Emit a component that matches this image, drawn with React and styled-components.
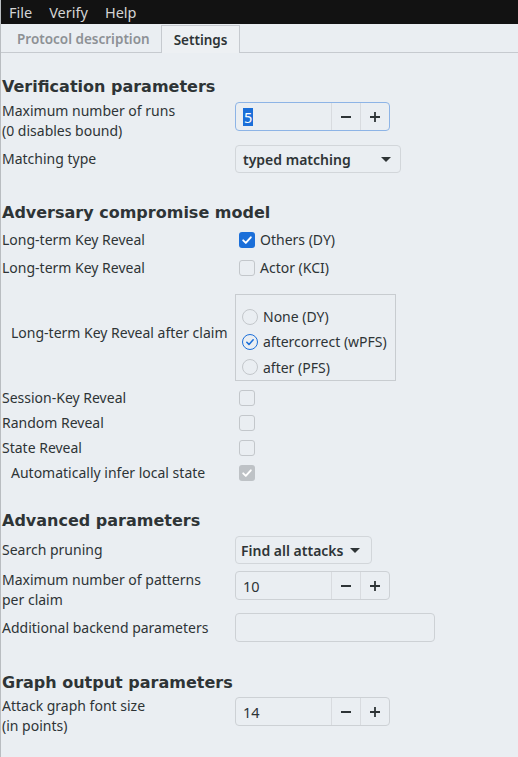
import React from "react";
import styled, { createGlobalStyle } from "styled-components";

const GlobalStyle = createGlobalStyle`
  html, body {
    margin: 0;
    padding: 0;
    background: #eaeef2;
  }
  body {
    font-family: "Noto Sans", "DejaVu Sans", sans-serif;
    font-size: 14px;
    color: #2e3436;
  }
`;

const Window = styled.div`
  width: 518px;
  height: 757px;
  overflow: hidden;
  background: #eaeef2;
  border-left: 1px solid #b9bdc1;
  box-sizing: border-box;
`;

const MenuBar = styled.div`
  height: 24px;
  background: #121212;
  display: flex;
  align-items: center;
  padding-left: 8px;
  gap: 17px;
`;

const MenuItem = styled.span`
  color: #d4d4d4;
  font-size: 14.5px;
  line-height: 24px;
`;

const TabBar = styled.div`
  height: 28px;
  display: flex;
  align-items: flex-end;
  padding-left: 5px;
  border-bottom: 1px solid #c6cacf;
`;

const Tab = styled.div`
  box-sizing: border-box;
  padding: 0 ${(p) => (p.$active ? "12px" : "10px")};
  display: flex;
  align-items: center;
  font-weight: 600;
  font-size: 13.5px;
  color: ${(p) => (p.$active ? "#2e3436" : "#8d9195")};
  background: ${(p) => (p.$active ? "#edf0f3" : "transparent")};
  border: 1px solid ${(p) => (p.$active ? "#c6cacf" : "transparent")};
  border-bottom: none;
  margin-bottom: ${(p) => (p.$active ? "-1px" : "0")};
  height: ${(p) => (p.$active ? "28px" : "27px")};
`;

const Content = styled.div`
  padding-left: 1px;
`;

const Heading = styled.h3`
  margin: 0;
  margin-top: ${(p) => p.$top}px;
  height: 20px;
  line-height: 20px;
  font-family: "DejaVu Sans", sans-serif;
  font-weight: bold;
  font-size: 16px;
  color: #2e3436;
`;

const Row = styled.div`
  display: grid;
  grid-template-columns: 233px auto;
  align-items: ${(p) => (p.$top ? "start" : "center")};
  height: ${(p) => p.$h}px;
  margin-top: ${(p) => p.$mt || 0}px;
  justify-items: start;
`;

const Label = styled.div`
  line-height: 19.5px;
  padding-left: ${(p) => (p.$indent ? "9px" : "0")};
  margin-top: ${(p) => p.$mt || 0}px;
  white-space: nowrap;
`;

const SpinBox = styled.div`
  display: flex;
  width: 155px;
  height: 29px;
  box-sizing: border-box;
  border: 1px solid ${(p) => (p.$focus ? "#8db4e6" : "#cdd1d5")};
  border-radius: 4px;
  overflow: hidden;
  margin-top: ${(p) => p.$mt || 0}px;
`;

const SpinValue = styled.div`
  flex: 1;
  display: flex;
  align-items: center;
  padding-left: 7px;
  font-size: 14.5px;
`;

const Selected = styled.span`
  background: #1b6fd9;
  color: #ffffff;
  line-height: 18px;
  padding: 0 1px;
`;

const SpinButton = styled.div`
  width: 28px;
  border-left: 1px solid #d8dbdf;
  display: flex;
  align-items: center;
  justify-content: center;
  color: #2e3436;
`;

const Combo = styled.div`
  width: ${(p) => p.$w}px;
  height: 28px;
  box-sizing: border-box;
  border: 1px solid #d2d6da;
  border-radius: 4px;
  display: flex;
  align-items: center;
  justify-content: space-between;
  padding: 0 ${(p) => p.$pr}px 0 ${(p) => p.$pl}px;
  font-weight: 600;
  font-size: 14px;
`;

const Arrow = styled.span`
  width: 0;
  height: 0;
  border-left: 5px solid transparent;
  border-right: 5px solid transparent;
  border-top: 5px solid #2e3436;
`;

const Entry = styled.div`
  width: 200px;
  height: 29px;
  box-sizing: border-box;
  border: 1px solid #cdd1d5;
  border-radius: 4px;
`;

const CheckLine = styled.div`
  display: flex;
  align-items: center;
  gap: 5px;
  padding-left: 4px;
  line-height: 20px;
`;

const Box = styled.span`
  width: 16px;
  height: 16px;
  box-sizing: border-box;
  border-radius: 3px;
  display: inline-flex;
  align-items: center;
  justify-content: center;
  background: ${(p) =>
    p.$checked ? (p.$disabled ? "#bec2c6" : "#1b6fd9") : "transparent"};
  border: ${(p) => (p.$checked ? "none" : "1px solid #c3c7cb")};
`;

const Frame = styled.div`
  width: 161px;
  height: 87px;
  box-sizing: border-box;
  border: 1px solid #c8ccd0;
  padding-top: 9px;
  display: flex;
  flex-direction: column;
`;

const RadioLine = styled.div`
  display: flex;
  align-items: center;
  gap: 5px;
  height: 26px;
  padding-left: 6px;
`;

const Circle = styled.span`
  width: 16px;
  height: 16px;
  box-sizing: border-box;
  border-radius: 50%;
  border: ${(p) => (p.$checked ? "1.5px solid #1b6fd9" : "1px solid #c3c7cb")};
  display: inline-flex;
  align-items: center;
  justify-content: center;
`;

const Minus = () => (
  <svg width="12" height="12" viewBox="0 0 12 12">
    <path d="M1 6h10" stroke="#2e3436" strokeWidth="1.8" />
  </svg>
);

const Plus = () => (
  <svg width="12" height="12" viewBox="0 0 12 12">
    <path d="M1 6h10M6 1v10" stroke="#2e3436" strokeWidth="1.8" />
  </svg>
);

const Tick = ({ color = "#fff", size = 12 }) => (
  <svg width={size} height={size} viewBox="0 0 12 12">
    <path
      d="M2.2 6.3l2.6 2.6 5-5.6"
      fill="none"
      stroke={color}
      strokeWidth="1.9"
      strokeLinecap="round"
      strokeLinejoin="round"
    />
  </svg>
);

const Spin = ({ value, focus, mt }) => (
  <SpinBox $focus={focus} $mt={mt}>
    <SpinValue>{focus ? <Selected>{value}</Selected> : value}</SpinValue>
    <SpinButton>
      <Minus />
    </SpinButton>
    <SpinButton>
      <Plus />
    </SpinButton>
  </SpinBox>
);

const Check = ({ checked, disabled, children }) => (
  <CheckLine>
    <Box $checked={checked} $disabled={disabled}>
      {checked && <Tick />}
    </Box>
    {children}
  </CheckLine>
);

const Radio = ({ checked, children }) => (
  <RadioLine>
    <Circle $checked={checked}>
      {checked && <Tick color="#1b6fd9" size={10} />}
    </Circle>
    {children}
  </RadioLine>
);

export default function App() {
  return (
    <Window>
      <GlobalStyle />
      <MenuBar>
        <MenuItem>File</MenuItem>
        <MenuItem>Verify</MenuItem>
        <MenuItem>Help</MenuItem>
      </MenuBar>
      <TabBar>
        <Tab>Protocol description</Tab>
        <Tab $active>Settings</Tab>
      </TabBar>
      <Content>
        <Heading $top={24}>Verification parameters</Heading>
        <Row $h={40} $mt={4} $top>
          <Label>
            Maximum number of runs
            <br />
            (0 disables bound)
          </Label>
          <Spin value="5" focus mt={1} />
        </Row>
        <Row $h={28} $mt={4}>
          <Label>Matching type</Label>
          <Combo $w={166} $pl={7} $pr={9}>
            typed matching
            <Arrow />
          </Combo>
        </Row>

        <Heading $top={30}>Adversary compromise model</Heading>
        <Row $h={28} $mt={3}>
          <Label>Long-term Key Reveal</Label>
          <Check checked>Others (DY)</Check>
        </Row>
        <Row $h={28}>
          <Label>Long-term Key Reveal</Label>
          <Check>Actor (KCI)</Check>
        </Row>
        <Row $h={87} $mt={12}>
          <Label $indent $mt={-9}>
            Long-term Key Reveal after claim
          </Label>
          <Frame>
            <Radio>None (DY)</Radio>
            <Radio checked>aftercorrect (wPFS)</Radio>
            <Radio>after (PFS)</Radio>
          </Frame>
        </Row>
        <Row $h={25} $mt={4}>
          <Label>Session-Key Reveal</Label>
          <Check />
        </Row>
        <Row $h={25}>
          <Label>Random Reveal</Label>
          <Check />
        </Row>
        <Row $h={25}>
          <Label>State Reveal</Label>
          <Check />
        </Row>
        <Row $h={25}>
          <Label $indent>Automatically infer local state</Label>
          <Check checked disabled />
        </Row>

        <Heading $top={26}>Advanced parameters</Heading>
        <Row $h={28} $mt={5}>
          <Label>Search pruning</Label>
          <Combo $w={137} $pl={5} $pr={11}>
            Find all attacks
            <Arrow />
          </Combo>
        </Row>
        <Row $h={40} $mt={6} $top>
          <Label>
            Maximum number of patterns
            <br />
            per claim
          </Label>
          <Spin value="10" mt={1} />
        </Row>
        <Row $h={29} $mt={3}>
          <Label>Additional backend parameters</Label>
          <Entry />
        </Row>

        <Heading $top={31}>Graph output parameters</Heading>
        <Row $h={40} $mt={3} $top>
          <Label>
            Attack graph font size
            <br />
            (in points)
          </Label>
          <Spin value="14" mt={1} />
        </Row>
      </Content>
    </Window>
  );
}
